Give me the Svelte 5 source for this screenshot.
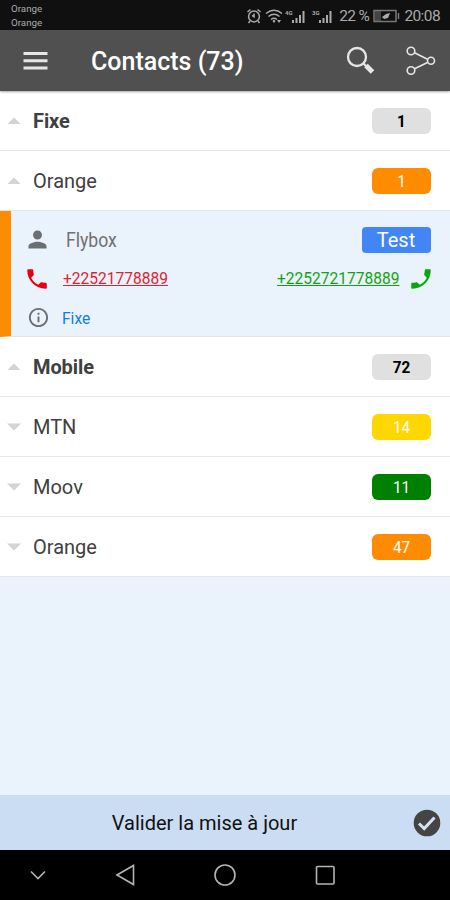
<!--
    App.svelte

    Contacts screen: operator groups with counters, one expanded contact
    and the update bar at the bottom.
-->
<script lang="ts">
    type Group = {
        label: string;
        count: number;
        color: string;
        open: boolean;
        main?: boolean;
    };

    const PHONE = 'M6.62 10.79c1.44 2.83 3.76 5.14 6.59 6.59l2.2-2.2c.27-.27.67-.36 1.02-.24 1.12.37 2.33.57 3.57.57.55 0 1 .45 1 1V20c0 .55-.45 1-1 1-9.39 0-17-7.61-17-17 0-.55.45-1 1-1h3.5c.55 0 1 .45 1 1 0 1.25.2 2.45.57 3.57.11.35.03.74-.25 1.02l-2.2 2.2z';

    const fixed: Group[] = [
        { label: 'Fixe', count: 1, color: '#e0e0e0', open: true, main: true },
        { label: 'Orange', count: 1, color: '#ff8c00', open: true },
    ];

    const mobile: Group[] = [
        { label: 'Mobile', count: 72, color: '#e0e0e0', open: true, main: true },
        { label: 'MTN', count: 14, color: '#ffd700', open: false },
        { label: 'Moov', count: 11, color: '#008000', open: false },
        { label: 'Orange', count: 47, color: '#ff8c00', open: false },
    ];
</script>

{#snippet row(group: Group)}
    <div class="row" class:main={group.main}>
        <svg class="arrow" width="14" height="8" viewBox="0 0 14 8">
            <path d={group.open ? 'M.5 7 7 .5l6.500 6.500z' : 'M0 .5h14L7 7.500z'} />
        </svg>
        <span class="label">{group.label}</span>
        <span class="count" style="background: {group.color};"><span>{group.count}</span></span>
    </div>
{/snippet}

{#snippet signal(kind: string)}
    <svg class="signal" width="20" height="17" viewBox="0 0 20 17">
        <text x="0" y="7">{kind}</text>
        <path d="M7 12h2v3H7zM10.500 10h2v5h-2zM14 7h2v8h-2zM17.500 3h2v12h-2z" />
    </svg>
{/snippet}

<div class="screen">
    <div class="status">
        <div class="carriers">
            <span>Orange</span>
            <span>Orange</span>
        </div>
        <div class="indicators">
            <svg class="alarm" width="16" height="16" viewBox="0 0 16 16">
                <circle cx="8" cy="8.500" r="5.400" />
                <path d="M8 5.500v3.300l-2-1.500M1.500 4 4.500 1.500M14.500 4l-3-2.500M4 13l-1.500 2M12 13l1.500 2" />
            </svg>
            <svg class="wifi" width="18" height="16" viewBox="0 0 18 16">
                <path d="M1 5.500q8-6.500 16 0M3.500 8.500q5.500-4.500 11 0M6 11.500q3-2.500 6 0" />
                <path class="solid" d="m7.500 13 1.500-1.500 1.500 1.500L9 15zM12 12h4l-2 3z" />
            </svg>
            {@render signal('4G')}
            {@render signal('3G')}
            <span class="percent">22 %</span>
            <svg class="battery" width="27" height="14" viewBox="0 0 27 14">
                <rect class="level" x="2" y="2" width="6" height="10" />
                <rect x="1" y="1.500" width="22" height="11" />
                <path d="M25.500 4v6" />
                <path class="solid" d="m9 8 4-3 4-1-2 5-4 1z" />
            </svg>
            <span class="clock">20:08</span>
        </div>
    </div>

    <header>
        <svg class="menu" width="25" height="20" viewBox="0 0 25 20">
            <path d="M.5 2.500h24M.5 9.800h24M.5 17h24" />
        </svg>
        <h1>Contacts (73)</h1>
        <svg class="search" width="30" height="30" viewBox="0 0 30 30">
            <circle cx="11" cy="11" r="9" />
            <path d="m17 17 4 4" />
            <path class="handle" d="m20 19.500 6.500 6.500" />
        </svg>
        <svg class="share" width="30" height="30" viewBox="0 0 30 30">
            <circle cx="5" cy="5" r="3.800" />
            <circle cx="25" cy="14.800" r="3.500" />
            <circle cx="5" cy="24.500" r="3.800" />
            <path d="m8.500 6.800 13 6.500M8.500 22.700l13-6.200" />
        </svg>
    </header>

    <main>
        {#each fixed as group}
            {@render row(group)}
        {/each}

        <section class="card">
            <div class="line name">
                <svg width="27" height="27" viewBox="0 0 24 24" fill="#6b6e72">
                    <path d="M12 12c2.210 0 4-1.790 4-4s-1.790-4-4-4-4 1.790-4 4 1.790 4 4 4zm0 2c-2.670 0-8 1.340-8 4v2h16v-2c0-2.660-5.330-4-8-4z" />
                </svg>
                <span class="contact"><span>Flybox</span></span>
                <span class="tag">Test</span>
            </div>
            <div class="line phones">
                <svg width="26" height="26" viewBox="0 0 24 24" fill="#e60012"><path d={PHONE} /></svg>
                <span class="number old"><span>+22521778889</span></span>
                <span class="number new"><span>+2252721778889</span></span>
                <svg class="mirrored" width="26" height="26" viewBox="0 0 24 24" fill="#09a609"><path d={PHONE} /></svg>
            </div>
            <div class="line info">
                <svg width="23" height="23" viewBox="0 0 24 24" fill="#6b6e72">
                    <path d="M11 17h2v-6h-2zm1-15C6.480 2 2 6.480 2 12s4.480 10 10 10 10-4.480 10-10S17.520 2 12 2zm0 18c-4.410 0-8-3.590-8-8s3.590-8 8-8 8 3.590 8 8-3.590 8-8 8zM11 9h2V7h-2z" />
                </svg>
                <span class="type"><span>Fixe</span></span>
            </div>
        </section>

        {#each mobile as group}
            {@render row(group)}
        {/each}
    </main>

    <footer>
        <span>Valider la mise à jour</span>
        <svg width="28" height="28" viewBox="0 0 28 28">
            <circle cx="14" cy="14" r="13.300" fill="#444" />
            <path d="m6 14.500 5.200 5L21.500 8.500" />
        </svg>
    </footer>

    <nav>
        <svg width="75" height="50" viewBox="0 0 75 50"><path d="m31 21.500 7 7 7-7" /></svg>
        <svg width="100" height="50" viewBox="0 0 100 50"><path d="M42 25 58.500 15.500v19z" /></svg>
        <svg width="100" height="50" viewBox="0 0 100 50"><circle cx="50" cy="25" r="10" /></svg>
        <svg width="100" height="50" viewBox="0 0 100 50"><rect x="41.500" y="16.500" width="17.500" height="17.500" rx="1" /></svg>
    </nav>
</div>

<style>
    :global(body) {
        margin: 0;
    }

    .screen {
        display: flex;
        flex-direction: column;
        width: 450px;
        height: 900px;
        overflow: hidden;
        background: #eaf2fb;
        color: #404040;
        font-family: Roboto, sans-serif;
        font-size: 20px;
    }

    svg {
        display: block;
        flex: none;
    }

    .status {
        display: flex;
        flex: none;
        justify-content: space-between;
        box-sizing: border-box;
        height: 30px;
        padding: 2px 10px 0 11px;
        background: #101010;
        color: #aaa;
    }

    .carriers {
        display: flex;
        flex-direction: column;
        font-size: 9.8px;
        line-height: 13.5px;
    }

    .indicators {
        display: flex;
        align-items: center;
        font-size: 15.5px;
        letter-spacing: -0.6px;
        white-space: nowrap;
    }

    .indicators svg {
        fill: none;
        stroke: #aaa;
        stroke-width: 1.5;
    }

    .indicators .signal {
        margin-right: 7px;
        fill: #aaa;
        stroke: none;
        font-size: 6px;
        font-weight: 700;
        letter-spacing: 0;
    }

    .indicators .solid {
        fill: #aaa;
        stroke: none;
    }

    .wifi {
        margin: 0 2px 0 3px;
    }

    .indicators .battery {
        margin: 0 4px 0 4px;
        stroke: #777;
    }

    .indicators .level {
        fill: #444;
        stroke: none;
    }

    header {
        display: flex;
        flex: none;
        align-items: center;
        box-sizing: border-box;
        height: 61px;
        padding: 0 14px 0 23px;
        background: #505050;
        box-shadow: 0 1px 2px rgba(0, 0, 0, 0.35);
        z-index: 1;
    }

    header svg {
        fill: none;
        stroke: #e6e6e6;
    }

    .menu {
        stroke-width: 3;
    }

    h1 {
        flex: 1;
        margin: 2px 0 0 43px;
        color: #fff;
        font-size: 25px;
        font-weight: 500;
    }

    .search {
        margin-right: 30px;
        stroke-width: 2.3;
    }

    .handle {
        stroke-width: 5;
    }

    .share {
        stroke-width: 1.6;
    }

    main {
        flex: 1;
    }

    .row {
        display: flex;
        align-items: center;
        box-sizing: border-box;
        height: 60px;
        padding: 1px 19.5px 0 7px;
        border-bottom: 1px solid #e4e6e8;
        background: #fff;
    }

    .arrow {
        fill: #d4d4d4;
    }

    .label {
        flex: 1;
        margin-left: 12px;
    }

    .count {
        width: 59px;
        height: 26px;
        border-radius: 6px;
        color: #fff;
        font-size: 17px;
        line-height: 26px;
        text-align: center;
    }

    .count span {
        display: block;
        transform: scaleX(0.9);
    }

    .main {
        font-weight: 700;
    }

    .main .label {
        letter-spacing: -0.1px;
    }

    .main .count {
        color: #000;
    }

    .card {
        box-sizing: border-box;
        height: 126px;
        padding: 9px 19.5px 0 13px;
        border-bottom: 1px solid #dfe4ea;
        border-left: 11px solid #ff8c00;
    }

    .line {
        display: flex;
        align-items: center;
        height: 39px;
    }

    .contact,
    .number,
    .type {
        white-space: nowrap;
    }

    .contact span,
    .number span,
    .type span {
        display: block;
        transform-origin: left;
        transform: scaleX(0.915);
    }

    .contact {
        flex: 1;
        margin-left: 15px;
        color: #707070;
    }

    .contact span {
        transform: scaleX(0.88);
    }

    .tag {
        width: 69px;
        height: 26px;
        border-radius: 4px;
        background: #4285f4;
        color: #fff;
        line-height: 27px;
        text-align: center;
    }

    .number {
        margin-top: -2px;
        font-size: 17px;
        text-decoration: underline;
    }

    .old {
        flex: 1;
        margin-left: 13px;
        color: #dc2430;
    }

    .new {
        width: 123px;
        color: #12a312;
    }

    .phones .mirrored {
        margin: 0 -3px 0 8px;
        transform: scaleX(-1);
    }

    .info svg {
        margin-left: 3px;
    }

    .type {
        margin-left: 12px;
        color: #0c7fe0;
        font-size: 17px;
    }

    footer {
        display: flex;
        flex: none;
        align-items: center;
        box-sizing: border-box;
        height: 55px;
        padding: 0 9px 0 0;
        background: #cbddf3;
        color: #111;
    }

    footer span {
        flex: 1;
        padding-right: 4px;
        text-align: center;
    }

    footer path {
        fill: none;
        stroke: #d4e2f2;
        stroke-width: 3;
    }

    nav {
        display: flex;
        flex: none;
        height: 50px;
        background: #000;
    }

    nav svg {
        fill: none;
        stroke: #b4b4b4;
        stroke-width: 1.6;
    }
</style>
